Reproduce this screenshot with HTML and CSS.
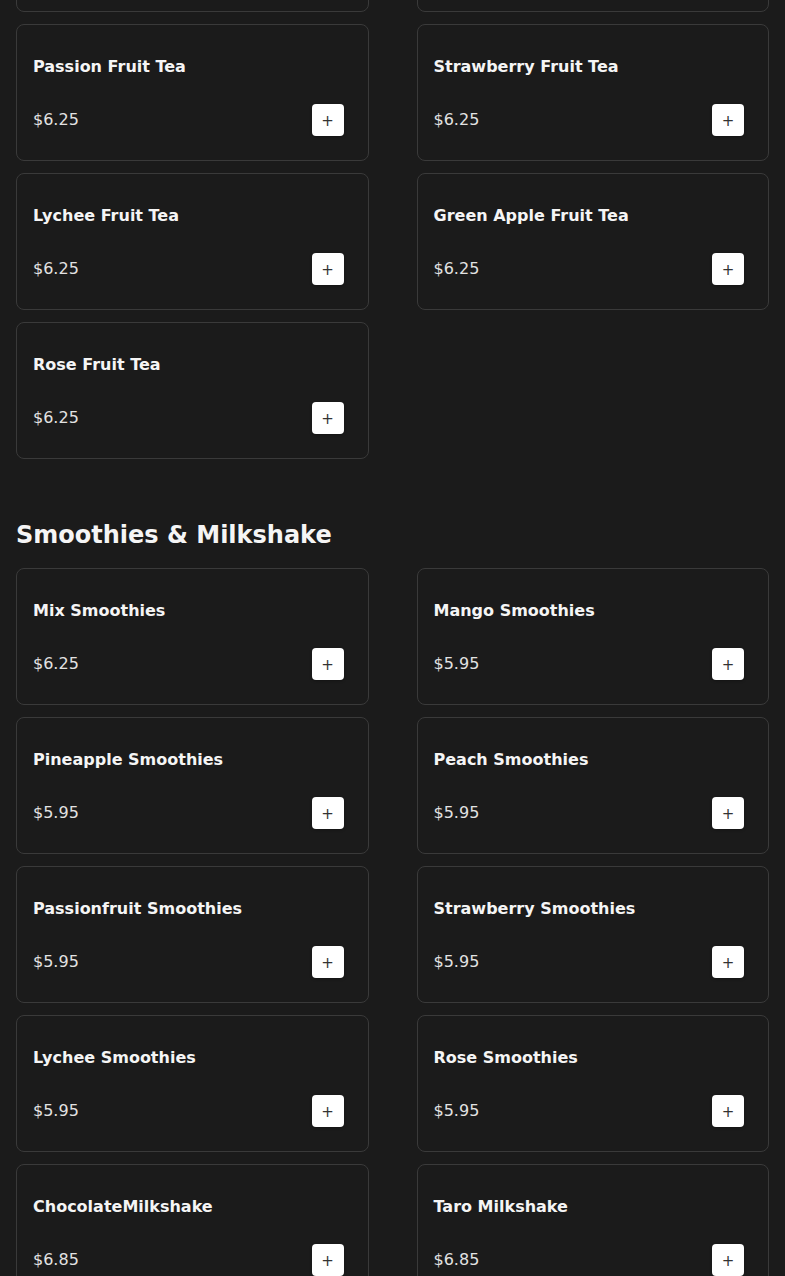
FILE: index.html
```html
<!DOCTYPE html>
<html lang="en">
<head>
    <meta charset="UTF-8">
    <meta name="viewport" content="width=device-width, initial-scale=1.0">
    <title>Menu</title>
    <link rel="stylesheet" href="styles.css">
</head>
<body>

    <!-- Fruit Tea -->
    <section class="menu-section menu-section-first">
        <div class="menu-grid">
            <div class="menu-card">
                <h3 class="item-name">Mango Fruit Tea</h3>
                <div class="item-foot">
                    <span class="item-price">$6.25</span>
                    <button class="add-btn" type="button">+</button>
                </div>
            </div>
            <div class="menu-card">
                <h3 class="item-name">Peach Fruit Tea</h3>
                <div class="item-foot">
                    <span class="item-price">$6.25</span>
                    <button class="add-btn" type="button">+</button>
                </div>
            </div>
            <div class="menu-card">
                <h3 class="item-name">Passion Fruit Tea</h3>
                <div class="item-foot">
                    <span class="item-price">$6.25</span>
                    <button class="add-btn" type="button">+</button>
                </div>
            </div>
            <div class="menu-card">
                <h3 class="item-name">Strawberry Fruit Tea</h3>
                <div class="item-foot">
                    <span class="item-price">$6.25</span>
                    <button class="add-btn" type="button">+</button>
                </div>
            </div>
            <div class="menu-card">
                <h3 class="item-name">Lychee Fruit Tea</h3>
                <div class="item-foot">
                    <span class="item-price">$6.25</span>
                    <button class="add-btn" type="button">+</button>
                </div>
            </div>
            <div class="menu-card">
                <h3 class="item-name">Green Apple Fruit Tea</h3>
                <div class="item-foot">
                    <span class="item-price">$6.25</span>
                    <button class="add-btn" type="button">+</button>
                </div>
            </div>
            <div class="menu-card">
                <h3 class="item-name">Rose Fruit Tea</h3>
                <div class="item-foot">
                    <span class="item-price">$6.25</span>
                    <button class="add-btn" type="button">+</button>
                </div>
            </div>
        </div>
    </section>

    <!-- Smoothies & Milkshake -->
    <section class="menu-section">
        <h2 class="section-title">Smoothies &amp; Milkshake</h2>
        <div class="menu-grid">
            <div class="menu-card">
                <h3 class="item-name">Mix Smoothies</h3>
                <div class="item-foot">
                    <span class="item-price">$6.25</span>
                    <button class="add-btn" type="button">+</button>
                </div>
            </div>
            <div class="menu-card">
                <h3 class="item-name">Mango Smoothies</h3>
                <div class="item-foot">
                    <span class="item-price">$5.95</span>
                    <button class="add-btn" type="button">+</button>
                </div>
            </div>
            <div class="menu-card">
                <h3 class="item-name">Pineapple Smoothies</h3>
                <div class="item-foot">
                    <span class="item-price">$5.95</span>
                    <button class="add-btn" type="button">+</button>
                </div>
            </div>
            <div class="menu-card">
                <h3 class="item-name">Peach Smoothies</h3>
                <div class="item-foot">
                    <span class="item-price">$5.95</span>
                    <button class="add-btn" type="button">+</button>
                </div>
            </div>
            <div class="menu-card">
                <h3 class="item-name">Passionfruit Smoothies</h3>
                <div class="item-foot">
                    <span class="item-price">$5.95</span>
                    <button class="add-btn" type="button">+</button>
                </div>
            </div>
            <div class="menu-card">
                <h3 class="item-name">Strawberry Smoothies</h3>
                <div class="item-foot">
                    <span class="item-price">$5.95</span>
                    <button class="add-btn" type="button">+</button>
                </div>
            </div>
            <div class="menu-card">
                <h3 class="item-name">Lychee Smoothies</h3>
                <div class="item-foot">
                    <span class="item-price">$5.95</span>
                    <button class="add-btn" type="button">+</button>
                </div>
            </div>
            <div class="menu-card">
                <h3 class="item-name">Rose Smoothies</h3>
                <div class="item-foot">
                    <span class="item-price">$5.95</span>
                    <button class="add-btn" type="button">+</button>
                </div>
            </div>
            <div class="menu-card">
                <h3 class="item-name">ChocolateMilkshake</h3>
                <div class="item-foot">
                    <span class="item-price">$6.85</span>
                    <button class="add-btn" type="button">+</button>
                </div>
            </div>
            <div class="menu-card">
                <h3 class="item-name">Taro Milkshake</h3>
                <div class="item-foot">
                    <span class="item-price">$6.85</span>
                    <button class="add-btn" type="button">+</button>
                </div>
            </div>
        </div>
    </section>

</body>
</html>
```

FILE: styles.css
```css
:root {
    --bg-color: #1b1b1b;
    --card-border: #3a3a3a;
    --txt-color: #f5f5f5;
    --price-color: #e2e2e2;
    --btn-color: #fff;
}

body {
    font-family: 'DejaVu Sans', 'Liberation Sans', sans-serif;
    background-color: var(--bg-color);
    color: var(--txt-color);
    margin: 0;
    padding: 0 16px;
    overflow: hidden;
}

/* page is shown scrolled: only the bottom of the first row peeks in */
.menu-section-first {
    margin-top: -125px;
}

.section-title {
    font-size: 24px;
    line-height: 28px;
    font-weight: bold;
    margin: 62px 0 19px;
}

.menu-grid {
    display: grid;
    grid-template-columns: 1fr 1fr;
    column-gap: 48px;
    row-gap: 12px;
}

.menu-card {
    border: 1px solid var(--card-border);
    border-radius: 8px;
    padding: 16px;
    background-color: var(--bg-color);
}

.item-name {
    font-size: 16px;
    line-height: 24px;
    font-weight: bold;
    margin: 14px 0 17px;
}

.item-foot {
    display: flex;
    justify-content: space-between;
    align-items: center;
}

.item-price {
    font-size: 16px;
    color: var(--price-color);
    padding-bottom: 2px;
}

.add-btn {
    width: 32px;
    height: 32px;
    margin: 8px;
    padding: 0;
    border: none;
    border-radius: 4px;
    background-color: var(--btn-color);
    color: #333;
    font-family: 'DejaVu Sans', sans-serif;
    font-size: 15px;
    line-height: 34px;
    cursor: pointer;
    box-shadow: 0 1px 3px rgba(0, 0, 0, 0.3);
}
```
